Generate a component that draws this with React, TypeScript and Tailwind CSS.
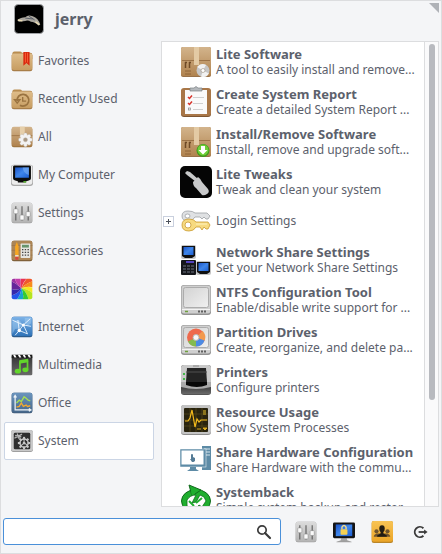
import type { ReactNode } from "react";

function Svg({ children, className }: { children: ReactNode; className: string }) {
  return (
    <svg viewBox="0 0 32 32" className={`${className} shrink-0`} aria-hidden="true">
      {children}
    </svg>
  );
}

const small = "h-[22px] w-[22px]";
const large = "h-8 w-8";

function Gradients() {
  return (
    <svg className="absolute h-0 w-0" aria-hidden="true">
      <defs>
        <linearGradient id="tan" x1="0" y1="0" x2="0" y2="1">
          <stop offset="0" stopColor="#dfbd8a" />
          <stop offset="1" stopColor="#c79d62" />
        </linearGradient>
        <linearGradient id="box" x1="0" y1="0" x2="0" y2="1">
          <stop offset="0" stopColor="#d3b48c" />
          <stop offset="1" stopColor="#b0834f" />
        </linearGradient>
        <linearGradient id="silver" x1="0" y1="0" x2="0" y2="1">
          <stop offset="0" stopColor="#dcdcdc" />
          <stop offset="1" stopColor="#b4b4b4" />
        </linearGradient>
        <linearGradient id="pale" x1="0" y1="0" x2="1" y2="1">
          <stop offset="0" stopColor="#d2d2d2" />
          <stop offset="1" stopColor="#f0f0f0" />
        </linearGradient>
        <linearGradient id="screen" x1="0" y1="0" x2="1" y2="1">
          <stop offset="0" stopColor="#1d55c8" />
          <stop offset="0.5" stopColor="#3f86ea" />
          <stop offset="1" stopColor="#1d5fd2" />
        </linearGradient>
        <linearGradient id="sky" x1="0" y1="0" x2="0" y2="1">
          <stop offset="0" stopColor="#7db3e8" />
          <stop offset="1" stopColor="#2f73b8" />
        </linearGradient>
        <linearGradient id="amber" x1="0" y1="0" x2="0" y2="1">
          <stop offset="0" stopColor="#f8c455" />
          <stop offset="1" stopColor="#eba527" />
        </linearGradient>
        <linearGradient id="steel" x1="0" y1="0" x2="0" y2="1">
          <stop offset="0" stopColor="#6a94bd" />
          <stop offset="1" stopColor="#46678a" />
        </linearGradient>
        <linearGradient id="dark" x1="0" y1="0" x2="0" y2="1">
          <stop offset="0" stopColor="#333333" />
          <stop offset="1" stopColor="#6a6a6a" />
        </linearGradient>
      </defs>
    </svg>
  );
}

function Folder({ children }: { children: ReactNode }) {
  return (
    <Svg className={small}>
      <path d="M2 5q0-3 3-3h8q2 0 3 2h12q3 0 3 3v6H2z" fill="#b98d50" />
      <rect x="1" y="5" width="30" height="26" rx="3" fill="#a87e49" />
      <rect x="1" y="5" width="30" height="24" rx="3" fill="url(#tan)" />
      {children}
    </Svg>
  );
}

const FavoritesIcon = () => (
  <Folder>
    <path d="M18 3h9v20l-4.500-4-4.500 4z" fill="#d9270e" />
    <path d="M21 4v14M24 4v14" stroke="#f45b32" strokeWidth="1.500" />
  </Folder>
);

const RecentIcon = () => (
  <Folder>
    <path d="M9 19a8.500 8.500 0 1 1 4 6" fill="none" stroke="#9a7340" strokeWidth="2.500" />
    <path d="M5 17l4 5 4-5zM17 13v6h5" fill="none" stroke="#9a7340" strokeWidth="2" />
  </Folder>
);

const gearTeeth = [0, 45, 90, 135, 180, 225, 270, 315];

const AllIcon = () => (
  <Svg className={small}>
    <rect x="1" y="2" width="30" height="29" rx="3" fill="#a0763f" />
    <rect x="1" y="1" width="30" height="28" rx="3" fill="url(#box)" />
    <path d="M1 14h30" stroke="#94693b" />
    <rect x="13" y="1" width="7" height="17" fill="#e6cfaa" />
    <g transform="translate(21 20)" fill="#f3f3f3" stroke="#b9b0a5" strokeWidth=".6">
      {gearTeeth.map((a) => (
        <rect key={a} x="-2.500" y="-10" width="5" height="7" rx="2" transform={`rotate(${a})`} />
      ))}
      <circle r="7" stroke="none" />
      <circle r="3" fill="#a99883" />
    </g>
  </Svg>
);

const ComputerIcon = () => (
  <Svg className={small}>
    <rect x="0" y="1" width="32" height="31" rx="4" fill="#a9a9a9" />
    <rect x="1" y="1" width="30" height="29" rx="4" fill="#ececec" />
    <path d="M3 4q0-2 2-2h22q2 0 2 2v17q0 2-3 3l-4 1v2H10v-2l-4-1q-3-1-3-3z" fill="#0c0c0c" />
    <rect x="6" y="5" width="20" height="15" fill="url(#screen)" />
    <path d="M17 5h9v11q-8-2-9-11z" fill="#79aef2" opacity=".6" />
    <rect x="18" y="25" width="4" height="2" fill="#6bd03a" />
  </Svg>
);

const SlidersIcon = () => (
  <Svg className={small}>
    <rect x="1" y="1" width="30" height="30" rx="3" fill="#9b9b9b" />
    <rect x="1" y="1" width="30" height="29" rx="3" fill="url(#silver)" />
    <path d="M7 6v21M16 6v21M25 6v21" stroke="#5b5b5b" strokeWidth="1.600" />
    <g fill="#fafafa" stroke="#888888" strokeWidth=".8">
      <rect x="4" y="10" width="6" height="7" rx="1" />
      <rect x="13" y="19" width="6" height="7" rx="1" />
      <rect x="22" y="14" width="6" height="7" rx="1" />
    </g>
  </Svg>
);

const AccessoriesIcon = () => (
  <Svg className={small}>
    <rect x="1" y="1" width="30" height="30" rx="3" fill="#80613a" />
    <rect x="1" y="1" width="30" height="28" rx="3" fill="#ac8656" />
    <path d="M1 8h30M1 15h30M1 22h30" stroke="#96724a" />
    <path d="M6 9l2.500-6L11 9v18q-2.500 3-5 0z" fill="#f6a623" />
    <path d="M6 24h5v4q-2.500 2-5 0z" fill="#d34b42" />
    <path d="M6 22h5v2H6z" fill="#e7e7e7" />
    <rect x="14" y="5" width="14" height="21" rx="1" fill="#e6e6e1" />
    <rect x="16" y="7" width="10" height="4" fill="#66946c" />
    <path d="M16 14h10M16 18h10M16 22h10" stroke="#444444" strokeWidth="2" strokeDasharray="2 2" />
  </Svg>
);

const GraphicsIcon = () => (
  <Svg className={small}>
    <clipPath id="wheel">
      <rect x="1" y="1" width="30" height="30" rx="3" />
    </clipPath>
    <g clipPath="url(#wheel)">
      <path d="M15 15Q12 8 15-2h10Q17 6 15 15" fill="#e83355" />
      <path d="M15 15Q18 6 25-2h10v6Q23 6 15 15" fill="#f0582b" />
      <path d="M15 15Q23 6 35 4v10Q24 11 15 15" fill="#f88c1c" />
      <path d="M15 15q10-4 20 0v10Q25 16 15 15" fill="#f7e81f" />
      <path d="M15 15q10 1 20 10v10h-9Q25 22 15 15" fill="#b6e51f" />
      <path d="M15 15q10 7 11 20H16q4-10-1-20" fill="#35cc2f" />
      <path d="M15 15q5 10 1 20H4q10-7 11-20" fill="#16a7cb" />
      <path d="M15 15Q14 28 4 35h-8v-9q13-1 19-11" fill="#2455e8" />
      <path d="M15 15Q9 25-4 26V14q11 5 19 1" fill="#3328ac" />
      <path d="M15 15Q7 19-4 14V3q10 3 19 12" fill="#64259a" />
      <path d="M15 15Q6 6-4 3v-6h9q1 10 10 18" fill="#9b31a1" />
      <path d="M15 15Q6 7 5-3h10q-3 10 0 18" fill="#c03dab" />
    </g>
  </Svg>
);

const InternetIcon = () => (
  <Svg className={small}>
    <rect x="1" y="1" width="30" height="30" rx="3" fill="#2a5b8c" />
    <rect x="1" y="1" width="30" height="28" rx="3" fill="url(#sky)" />
    <path d="M2 9q5-5 11-2l4 6-5 5-6 1-4 7zM20 3h9v8l-5 3-4-4z" fill="#a4cdf1" opacity=".5" />
    <path d="M2 6l16 7 10-9M18 13l11 2M18 13l-6 8-2-15M12 21l12 5M12 21l-6 7M18 13l6 13" fill="none" stroke="#eaf5ff" strokeWidth="1.300" />
    <circle cx="18" cy="13" r="2.200" fill="#ffffff" />
    <circle cx="12" cy="21" r="2.500" fill="#ffffff" />
  </Svg>
);

const MultimediaIcon = () => (
  <Svg className={small}>
    <rect x="1" y="2" width="30" height="29" rx="2" fill="url(#dark)" />
    <path d="M1 1h30v5H1z" fill="#1c1c1c" />
    <path d="M3 1h3l2 4H5zM10 1h3l2 4h-3zM17 1h3l2 4h-3zM24 1h3l2 4h-3z" fill="#ffffff" />
    <path d="M12 9l13-2v5l-13 2z" fill="#62d62b" />
    <path d="M13 11v14M24 9v13" stroke="#62d62b" strokeWidth="2.500" />
    <ellipse cx="10" cy="25" rx="4.500" ry="3.500" fill="#62d62b" />
    <ellipse cx="21" cy="23" rx="4.500" ry="3.500" fill="#62d62b" />
  </Svg>
);

const OfficeIcon = () => (
  <Svg className={small}>
    <rect x="1" y="1" width="30" height="30" rx="3" fill="#3a536f" />
    <rect x="1" y="1" width="30" height="29" rx="3" fill="url(#steel)" />
    <path d="M6 5v21h22M4 8l2-3 2 3M26 24l3 2-3 2" fill="none" stroke="#eef3f7" strokeWidth="1.800" />
    <path d="M8 16l4-4 3 2 4-7 3 2 3 3 3 1" fill="none" stroke="#a6dc54" strokeWidth="2" />
    <path d="M8 22l4-1 3-5 3 5 4-2 2 2 4-1" fill="none" stroke="#f3a92e" strokeWidth="2" />
  </Svg>
);

const SystemIcon = () => (
  <Svg className={small}>
    <rect x="0" y="0" width="32" height="32" rx="4" fill="#929292" />
    <rect x="0" y="0" width="32" height="31" rx="4" fill="#c9c9c9" />
    <rect x="4" y="4" width="24" height="24" rx="2" fill="#2f2f2f" />
    <g transform="translate(19 19)" fill="#c8c8c8">
      {gearTeeth.map((a) => (
        <rect key={a} x="-1.500" y="-9" width="3" height="4" transform={`rotate(${a})`} />
      ))}
      <circle r="6" fill="none" stroke="#c8c8c8" strokeWidth="2" />
      <path d="M0 0L-5 4M0 0L5 3M0 0V-5" stroke="#c8c8c8" strokeWidth="1.500" />
      <circle r="2" />
    </g>
    <path d="M5 12l11-6M6 8l9 2M9 5l3 8" stroke="#b5b5b5" strokeWidth="2" />
  </Svg>
);

const LockScreenIcon = () => (
  <Svg className={small}>
    <path d="M12 25h8l1 4H11z" fill="#aaaaaa" />
    <path d="M5 30q11-4 22 0v1H5z" fill="#9d9d9d" />
    <rect x="0" y="2" width="32" height="23" rx="2" fill="#141414" />
    <rect x="4" y="5" width="24" height="17" fill="url(#screen)" />
    <path d="M13 12V9q3-5 6 0v3" fill="none" stroke="#f3dc8b" strokeWidth="2" />
    <rect x="11" y="12" width="10" height="8" rx="1" fill="#f7d252" />
  </Svg>
);

const UsersIcon = () => (
  <Svg className={small}>
    <rect x="1" y="0" width="31" height="32" rx="3" fill="#ba8528" />
    <rect x="1" y="0" width="31" height="30" rx="3" fill="url(#amber)" />
    <g fill="#6f532b">
      <circle cx="8" cy="15" r="3" />
      <circle cx="24" cy="15" r="3" />
      <path d="M4 23q0-4 5-5h14q5 1 5 5z" />
    </g>
    <path d="M12 11q0-5 4-5t4 5q0 4-2 5v2l5 3v2H9v-2l5-3v-2q-2-1-2-5z" fill="#231c12" />
  </Svg>
);

const LogoutIcon = () => (
  <Svg className={small}>
    <path d="M21 10.500A7.500 7.500 0 1 0 21 21.500" fill="none" stroke="#393939" strokeWidth="2.800" />
    <path d="M14 16h10" stroke="#393939" strokeWidth="2.600" />
    <path d="M22 12.500l5 3.500-5 3.500z" fill="#393939" />
  </Svg>
);

function Carton({ children }: { children?: ReactNode }) {
  return (
    <Svg className={large}>
      <rect x="1" y="1" width="30" height="30" rx="2" fill="#987149" />
      <rect x="1" y="1" width="30" height="29" rx="2" fill="url(#box)" />
      <path d="M2 14.500h28" stroke="#9c7347" />
      <rect x="14" y="1" width="5" height="18" fill="#e3caa4" />
      <path d="M5.500 16v6M9.500 16v6M5 16.500h2M9 16.500h2" stroke="#6f4a25" strokeWidth="1.500" />
      <path d="M5 25h6M5 28h6" stroke="#8e6439" />
      {children}
    </Svg>
  );
}

const LiteSoftwareIcon = () => (
  <Carton>
    <circle cx="23" cy="24.500" r="6.500" fill="#c6c6c6" />
    <path d="M23 24.500L17 21q4-5 9-2zM23 24.500l6 3q-3 5-8 3z" fill="#f1f1f1" />
    <circle cx="23" cy="24.500" r="2" fill="#ffffff" stroke="#9a8d7c" strokeWidth=".6" />
  </Carton>
);

const InstallIcon = () => (
  <Carton>
    <circle cx="23" cy="24.500" r="6.500" fill="#3b991e" />
    <circle cx="23" cy="24" r="5.500" fill="#6fcf36" />
    <path d="M21 20h4v4h2.500L23 28.500 18.500 24H21z" fill="#ffffff" />
  </Carton>
);

const ReportIcon = () => (
  <Svg className={large}>
    <rect x="1" y="3" width="30" height="28" rx="3" fill="#7e5632" />
    <rect x="1" y="2" width="30" height="28" rx="3" fill="#a97748" />
    <rect x="5" y="4" width="22" height="24" fill="#fafafa" />
    <path d="M10 5V2h4q2-3 4 0h4v3z" fill="#b4b8bc" stroke="#7d8185" strokeWidth=".7" />
    <path d="M8 11l1.500 1.500L12 9.500M8 17l1.500 1.500 2.500-3" fill="none" stroke="#d7342b" strokeWidth="1.500" />
    <rect x="8.500" y="22" width="2" height="2" fill="none" stroke="#888888" strokeWidth=".7" />
    <path d="M13 11.500h11M13 17.500h10M13 23.500h10" stroke="#d0d0d0" />
  </Svg>
);

const TweaksIcon = () => (
  <Svg className={large}>
    <rect x="0" y="0" width="32" height="32" rx="5" fill="#050505" />
    <path d="M5 7l2-2 3 1 8 7-2.500 2.500L7 9z" fill="#c8c9ca" />
    <path d="M13 16l5-5q3 2 4 5l6 7q2 3-1 5t-5 1l-6-7q-3-2-3-6z" fill="#c8c9ca" />
  </Svg>
);

const KeysIcon = () => (
  <Svg className={large}>
    <path
      d="M2 11q0-5 6-5 5 0 7 2h12l3 3-2 3h-2l-2-2-2 2-2-2h-5q-2 4-7 4-6 0-6-5zm3 0q0 2 2.500 2T10 11 7.500 9 5 11z"
      fill="#dfe1e3"
      fillRule="evenodd"
      stroke="#9da1a5"
      strokeWidth=".8"
    />
    <path
      d="M2 20q0-6 7-6 5 0 7 3h12l2 3-2 4h-2l-2-2-2 3-2-3h-4q-2 4-7 4-7 0-7-6zm3 0q0 3 3 3t3-3-3-3-3 3z"
      fill="#f7da80"
      fillRule="evenodd"
      stroke="#c99a30"
      strokeWidth=".8"
    />
    <path d="M16 19h11" stroke="#fff3bf" />
  </Svg>
);

function MiniMonitor() {
  return (
    <>
      <rect x="1" y="1" width="15" height="14" rx="2" fill="#c4c4c4" />
      <path d="M2 2h13v10l-3 2H5l-3-2z" fill="#101010" />
      <rect x="3.500" y="3" width="10" height="8" fill="url(#screen)" />
    </>
  );
}

const NetworkIcon = () => (
  <Svg className={large}>
    <MiniMonitor />
    <rect x="1" y="16" width="15" height="15" rx="1" fill="#15171c" />
    <rect x="6" y="17" width="8" height="2" fill="#5545c0" />
    <path d="M3 22h11M3 25h11M3 28h11" stroke="#50555f" strokeWidth="1.500" strokeDasharray="3 1" />
    <g transform="translate(15 16)">
      <MiniMonitor />
    </g>
  </Svg>
);

function Drive({ children }: { children?: ReactNode }) {
  return (
    <Svg className={large}>
      <rect x="1" y="1" width="30" height="30" rx="3" fill="#929292" />
      <rect x="1.500" y="1.500" width="29" height="28" rx="3" fill="#cfcfcf" />
      <rect x="3.500" y="3.500" width="25" height="20" rx="2" fill="url(#pale)" stroke="#acacac" />
      <path d="M2 25.500h28" stroke="#f3f3f3" />
      <path d="M5 27.500h3" stroke="#6f9e3c" strokeWidth="1.500" />
      <path d="M18 27.500h9" stroke="#606060" strokeWidth="2" strokeDasharray="2 1" />
      {children}
    </Svg>
  );
}

const PartitionIcon = () => (
  <Drive>
    <circle cx="16" cy="13.500" r="9" fill="#ee6a4d" />
    <path d="M16 13.500L22.500 7a9 9 0 0 1 2 10z" fill="#f2994f" />
    <path d="M16 13.500l8.500 3a9 9 0 0 1-8.500 6z" fill="#4d8be4" />
    <path d="M16 13.500v9a9 9 0 0 1-8-5z" fill="#84bb50" />
    <circle cx="16" cy="13.500" r="3" fill="#f7f7f7" stroke="#b6b6b6" />
  </Drive>
);

const PrinterIcon = () => (
  <Svg className={large}>
    <rect x="1" y="1" width="30" height="30" rx="3" fill="#555555" />
    <path d="M1 4q0-3 3-3h24q3 0 3 3v17H1z" fill="#c9c9c9" />
    <path d="M1 21h30v7q0 2-3 2H4q-3 0-3-2z" fill="url(#dark)" />
    <path d="M1 18h30v5q-15 4-30 0z" fill="#a9a9a9" />
    <path d="M7 4h19l1 14H6z" fill="#242424" />
    <path d="M6 8h21" stroke="#505050" />
    <path d="M6 18h21v3q-10 4-21 0z" fill="#070707" />
    <path d="M13 2h6" stroke="#8c8c8c" />
    <path d="M3 10h2M3 15h2" stroke="#43b749" strokeWidth="2" />
  </Svg>
);

const ResourceIcon = () => (
  <Svg className={large}>
    <rect x="1" y="1" width="30" height="30" rx="3" fill="#8d8d8d" />
    <rect x="1" y="1" width="30" height="29" rx="3" fill="#c4c4c4" />
    <rect x="4" y="4" width="24" height="24" rx="1" fill="#28230e" />
    <path d="M4 10h24M4 16h24M4 22h24M10 4v24M16 4v24M22 4v24" stroke="#574c1b" strokeWidth=".7" />
    <path d="M5 17h3l2-3 2-8 3 17 2-8 2 3 2-2h6" fill="none" stroke="#f2b91c" strokeWidth="1.200" />
    <path d="M23 6h3v5h-3z" fill="#8b741c" />
    <path d="M17 25h4M23 24h4l-2 2z" fill="#d9a91c" stroke="#d9a91c" />
  </Svg>
);

const HardwareIcon = () => (
  <Svg className={large}>
    <path d="M22 2h9v24h-9z" fill="#5d8ba6" />
    <path d="M24 5h6M24 8h6M24 11h6" stroke="#d6e4ec" />
    <rect x="0" y="5" width="26" height="18" fill="#5d8ba6" stroke="#ffffff" strokeWidth=".5" />
    <rect x="1.500" y="6.500" width="22" height="14" fill="#ffffff" />
    <path d="M10 23h6v2l3 2H7l3-2z" fill="#5d8ba6" />
    <path d="M11 10.500q1-1 2 0v2.500l2 1v3L13.500 18H12l-2-3h1z" fill="#547b95" />
  </Svg>
);

const SystembackIcon = () => (
  <Svg className={large}>
    <ellipse cx="16" cy="17" rx="14.500" ry="11.500" fill="#1fae2e" stroke="#126a1d" />
    <path d="M9 1l12 5-9 6z" fill="#1fae2e" stroke="#126a1d" />
    <path d="M11 7l5 1-4 6z" fill="#1fae2e" />
    <path d="M7 16q3-5 9-5l-4 8 4-1 4-7 4 2 2 4-4 6-3-2-4 5-8-4z" fill="#ffffff" stroke="#126a1d" strokeWidth=".8" />
    <path d="M9 17l5 5M16 19l6-5" stroke="#1fae2e" strokeWidth="2" />
  </Svg>
);

const categories = [
  { name: "Favorites", Icon: FavoritesIcon },
  { name: "Recently Used", Icon: RecentIcon },
  { name: "All", Icon: AllIcon },
  { name: "My Computer", Icon: ComputerIcon },
  { name: "Settings", Icon: SlidersIcon },
  { name: "Accessories", Icon: AccessoriesIcon },
  { name: "Graphics", Icon: GraphicsIcon },
  { name: "Internet", Icon: InternetIcon },
  { name: "Multimedia", Icon: MultimediaIcon },
  { name: "Office", Icon: OfficeIcon },
  { name: "System", Icon: SystemIcon },
];

const appsBeforeLogin = [
  { name: "Lite Software", text: "A tool to easily install and remove...", Icon: LiteSoftwareIcon },
  { name: "Create System Report", text: "Create a detailed System Report ...", Icon: ReportIcon },
  { name: "Install/Remove Software", text: "Install, remove and upgrade soft...", Icon: InstallIcon },
  { name: "Lite Tweaks", text: "Tweak and clean your system", Icon: TweaksIcon },
];

const appsAfterLogin = [
  { name: "Network Share Settings", text: "Set your Network Share Settings", Icon: NetworkIcon },
  { name: "NTFS Configuration Tool", text: "Enable/disable write support for ...", Icon: Drive },
  { name: "Partition Drives", text: "Create, reorganize, and delete pa...", Icon: PartitionIcon },
  { name: "Printers", text: "Configure printers", Icon: PrinterIcon },
  { name: "Resource Usage", text: "Show System Processes", Icon: ResourceIcon },
  { name: "Share Hardware Configuration", text: "Share Hardware with the commu...", Icon: HardwareIcon },
  { name: "Systemback", text: "Simple system backup and restor...", Icon: SystembackIcon },
];

function AppRow({ name, text, Icon }: { name: string; text: string; Icon: () => ReactNode }) {
  return (
    <li>
      <button className="flex h-10 w-full items-center gap-1 pl-[18px] text-left">
        <Icon />
        <span className="min-w-0 whitespace-nowrap leading-[15px]">
          <span className="block text-[13px] font-bold leading-[15px]">{name}</span>
          <span className="block">{text}</span>
        </span>
      </button>
    </li>
  );
}

const actions = [
  { name: "All Settings", Icon: SlidersIcon },
  { name: "Lock Screen", Icon: LockScreenIcon },
  { name: "Switch Users", Icon: UsersIcon },
  { name: "Log Out", Icon: LogoutIcon },
];

export default function App() {
  return (
    <div className="flex h-screen flex-col border border-[#dcdddf] bg-[#f4f5f7] font-['Noto_Sans',sans-serif] text-xs text-[#5c616c]">
      <Gradients />
      <header className="flex h-10 shrink-0 items-start pr-[2px] pl-[13px]">
        <div className="flex flex-1 items-center gap-[11px] pt-[3px]">
          <svg viewBox="0 0 32 32" className="h-[30px] w-[30px]" role="img" aria-label="jerry">
            <rect x=".5" y=".5" width="31" height="31" rx="4" fill="#000000" stroke="#a5a7ab" />
            <path d="M4 17q3-3 8-3 3-3 8-1 6 2 8 9l-2 1q-4-4-8-4-3-2-6-1l-7 1z" fill="#aaa69e" />
            <path d="M4 17l5 1M23 19l4 3" stroke="#eadcb4" strokeWidth="1.500" />
            <path d="M12 15l8 1M16 13l6 4" stroke="#545a64" />
          </svg>
          <h1 className="text-base font-bold leading-6">jerry</h1>
        </div>
        <button aria-label="Resize" className="mt-[2px] h-[10px] w-[10px]">
          <svg viewBox="0 0 10 10" className="h-full w-full">
            <path d="M0 0h10v10z" fill="#afb2b7" />
          </svg>
        </button>
      </header>

      <main className="flex min-h-0 flex-1 gap-[7px] pr-[2px] pl-[3px]">
        <nav className="w-[150px] shrink-0 pt-px">
          {categories.map(({ name, Icon }) => (
            <button
              key={name}
              aria-current={name === "System" ? "page" : undefined}
              className={`flex h-[38px] w-full items-center gap-[5px] rounded-[2px] border px-[6px] ${
                name === "System" ? "border-[#cbd5e5] bg-white" : "border-transparent"
              }`}
            >
              <Icon />
              <span>{name}</span>
            </button>
          ))}
        </nav>

        <section className="flex min-w-0 flex-1 border border-[#dcdddf] bg-white" aria-label="Applications">
          <ul className="min-w-0 flex-1 overflow-hidden">
            {appsBeforeLogin.map((app) => (
              <AppRow key={app.name} {...app} />
            ))}
            <li className="flex h-[38px] items-center pl-px">
              <button
                aria-label="Expand Login Settings"
                className="flex h-[11px] w-[11px] items-center justify-center border border-[#c9d0de] bg-white"
              >
                <svg viewBox="0 0 5 5" className="h-[5px] w-[5px]">
                  <path d="M0 2.500h5M2.500 0v5" stroke="#4c515b" />
                </svg>
              </button>
              <button className="flex items-center gap-1 pl-[6px]">
                <KeysIcon />
                <span>Login Settings</span>
              </button>
            </li>
            {appsAfterLogin.map((app) => (
              <AppRow key={app.name} {...app} />
            ))}
          </ul>
          <div className="flex w-[14px] shrink-0 flex-col items-center border-l border-[#dcdddf] bg-[#fafafb] pt-[2px]">
            <div className="h-[77%] w-[6px] rounded-full bg-[#b8babf]" />
          </div>
        </section>
      </main>

      <footer className="flex shrink-0 items-center pt-[11px] pr-[2px] pb-2 pl-[2px]">
        <label className="flex h-[27px] flex-1 items-center rounded-[3px] border border-[#4a90d9] bg-white pr-2">
          <input aria-label="Search" className="min-w-0 flex-1 self-stretch px-2 outline-none" />
          <svg viewBox="0 0 16 16" className="h-4 w-4 shrink-0" aria-hidden="true">
            <circle cx="6" cy="6" r="4.200" fill="none" stroke="#3b3b3b" strokeWidth="1.700" />
            <path d="M9 9l5 5" stroke="#3b3b3b" strokeWidth="2.200" strokeLinecap="round" />
          </svg>
        </label>
        <div className="flex gap-4 pr-2 pl-[14px]">
          {actions.map(({ name, Icon }) => (
            <button key={name} aria-label={name}>
              <Icon />
            </button>
          ))}
        </div>
      </footer>
    </div>
  );
}
